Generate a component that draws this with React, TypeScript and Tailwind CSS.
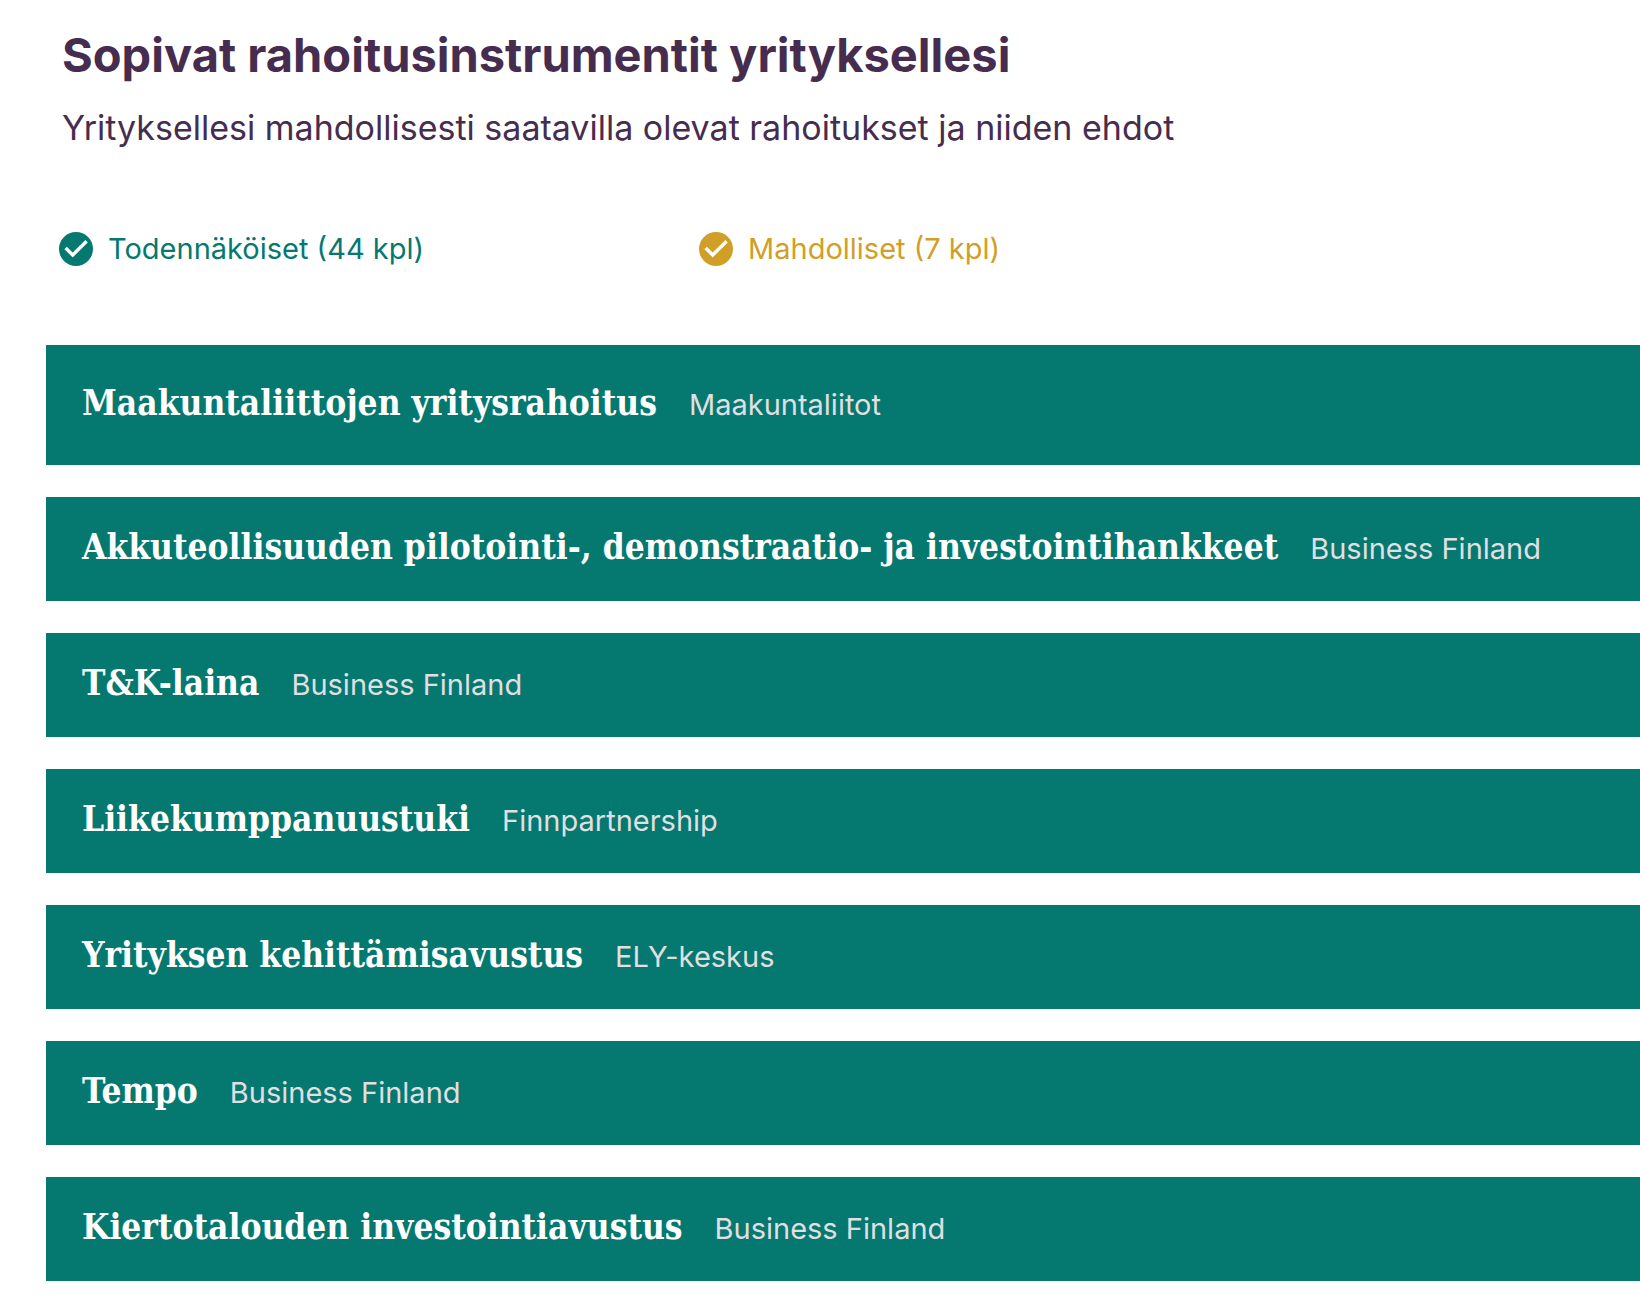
import { clsx } from "clsx"

type Instrument = {
  name: string
  provider: string
}

const instruments: Instrument[] = [
  { name: "Maakuntaliittojen yritysrahoitus", provider: "Maakuntaliitot" },
  { name: "Akkuteollisuuden pilotointi-, demonstraatio- ja investointihankkeet", provider: "Business Finland" },
  { name: "T&K-laina", provider: "Business Finland" },
  { name: "Liikekumppanuustuki", provider: "Finnpartnership" },
  { name: "Yrityksen kehittämisavustus", provider: "ELY-keskus" },
  { name: "Tempo", provider: "Business Finland" },
  { name: "Kiertotalouden investointiavustus", provider: "Business Finland" },
]

function CheckBadge() {
  return (
    <svg viewBox="0 0 34 34" className="size-[34px] shrink-0" aria-hidden="true">
      <circle cx="17" cy="17" r="17" fill="currentColor" />
      <path d="M6.6 16 L13.7 23 L27.6 9.2" fill="none" stroke="#fff" strokeWidth="3.4" />
    </svg>
  )
}

function LegendItem({ label, className }: { label: string; className: string }) {
  return (
    <li className={clsx("flex w-[640px] items-center gap-[15px] text-[29px] leading-10", className)}>
      <CheckBadge />
      <span>{label}</span>
    </li>
  )
}

function InstrumentRow({ name, provider, first }: Instrument & { first: boolean }) {
  return (
    <li>
      <button
        type="button"
        className={clsx(
          "flex w-full items-baseline gap-8 bg-[#05786f] px-9 text-left whitespace-nowrap",
          first ? "pt-8 pb-9" : "pt-6 pb-7",
        )}
      >
        <span className="font-['DejaVu_Serif_Condensed','DejaVu_Serif',serif] text-[35px] leading-[52px] font-bold text-white">
          {name}
        </span>
        <span className="text-[29px] leading-10 text-[#e0dfe1]">{provider}</span>
      </button>
    </li>
  )
}

export default function App() {
  return (
    <main className="overflow-hidden bg-white pt-7 pb-4 pl-[46px] font-['Inter','Open_Sans',sans-serif] text-[#462d4f]">
      <header className="px-4">
        <h1 className="text-[47px] leading-[54px] font-bold">Sopivat rahoitusinstrumentit yrityksellesi</h1>
        <p className="mt-[22px] text-[34px] leading-[48px]">
          Yrityksellesi mahdollisesti saatavilla olevat rahoitukset ja niiden ehdot
        </p>
      </header>

      <ul className="mt-[77px] flex px-[13px]">
        <LegendItem label="Todennäköiset (44 kpl)" className="text-[#05786f]" />
        <LegendItem label="Mahdolliset (7 kpl)" className="text-[#cf9f28]" />
      </ul>

      <ul className="mt-[76px] flex flex-col gap-8">
        {instruments.map((instrument, index) => (
          <InstrumentRow key={instrument.name} {...instrument} first={index === 0} />
        ))}
      </ul>
    </main>
  )
}
